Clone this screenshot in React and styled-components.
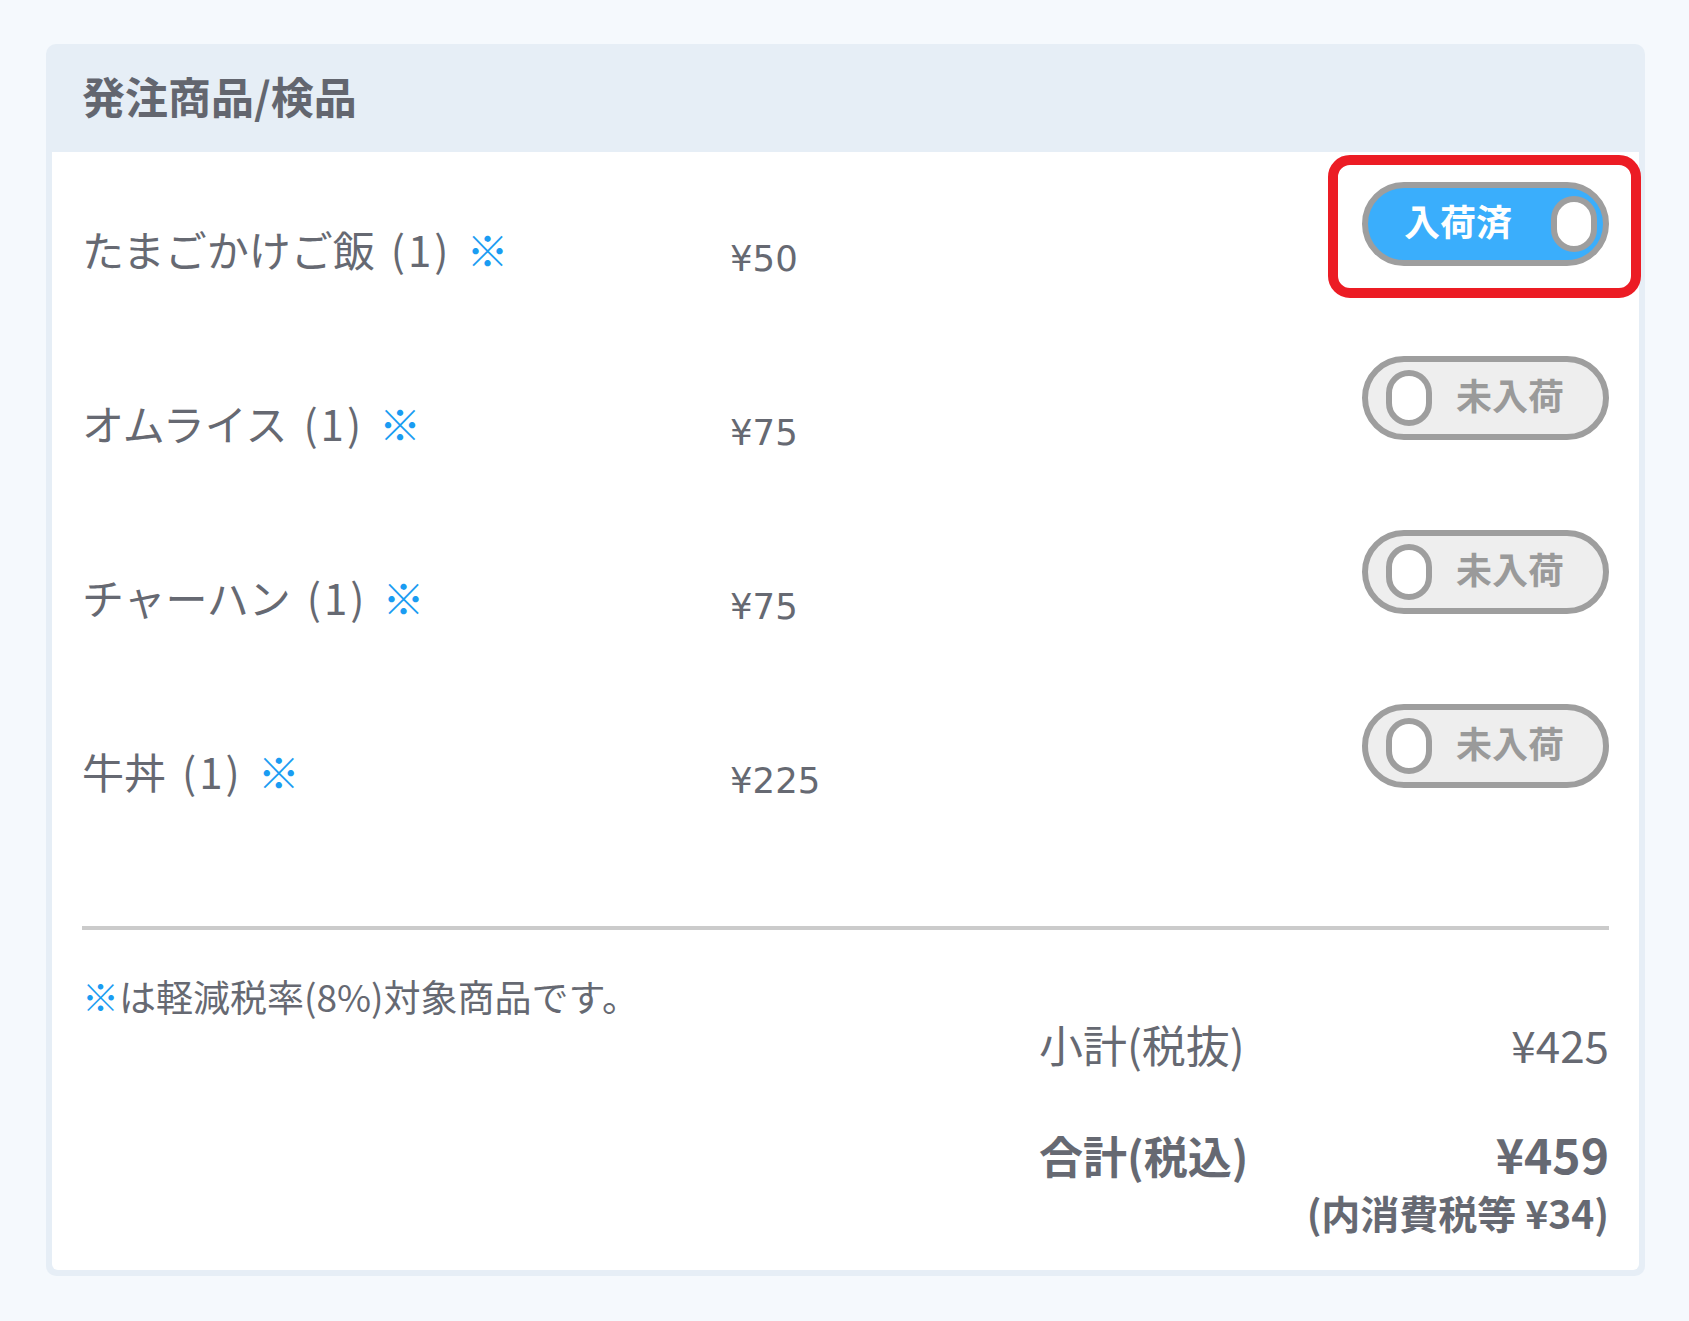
import React from 'react';
import styled, { createGlobalStyle } from 'styled-components';

const GlobalStyle = createGlobalStyle`
  html, body {
    margin: 0;
    padding: 0;
    background: #f5f9fd;
  }
  body {
    font-family: "Noto Sans CJK JP", "Noto Sans", sans-serif;
    color: #666972;
  }
`;

const Page = styled.div`
  padding: 44px 44px 45px 46px;
`;

const Card = styled.section`
  background: #e6eef6;
  border-radius: 10px;
  padding: 0 6px 6px;
`;

const Header = styled.header`
  height: 108px;
  box-sizing: border-box;
  display: flex;
  align-items: center;
  padding: 0 30px 6px;
`;

const Title = styled.h2`
  margin: 0;
  font-size: 43px;
  line-height: 1;
  font-weight: 700;
  color: #63666f;
`;

const Body = styled.div`
  background: #fff;
  border-radius: 0 0 6px 6px;
  padding: 0 30px 34px;
`;

const Row = styled.div`
  display: flex;
  align-items: flex-start;
  height: 174px;
`;

const Name = styled.div`
  width: 648px;
  padding-top: 65px;
  font-size: 42px;
  line-height: 63px;
  color: #666972;
`;

const Qty = styled.span`
  margin-left: 16px;
  letter-spacing: 3px;
`;

const Mark = styled.span`
  color: #1a9cf2;
  margin-left: ${p => p.$gap || 0}px;
`;

const Price = styled.div`
  flex: 1;
  padding-top: 80px;
  font-family: "DejaVu Sans", sans-serif;
  font-size: 35.5px;
  line-height: 54px;
  color: #666972;
`;

const ToggleWrap = styled.div`
  position: relative;
  margin-top: 30px;

  ${p => p.$highlight && `
    &::after {
      content: '';
      position: absolute;
      inset: -27px -32px -32px -34px;
      border: 10px solid #ec1c24;
      border-radius: 22px;
      pointer-events: none;
    }
  `}
`;

const Toggle = styled.button`
  box-sizing: border-box;
  width: 247px;
  height: 84px;
  border: 6px solid #9e9e9e;
  border-radius: 42px;
  display: flex;
  align-items: center;
  gap: ${p => (p.$on ? 0 : 24)}px;
  justify-content: ${p => (p.$on ? 'space-between' : 'flex-start')};
  padding: ${p => (p.$on ? '0 6px 0 36px' : '0 0 0 18px')};
  background: ${p => (p.$on ? '#3aaefc' : '#eeeeee')};
  font-family: "Noto Sans CJK JP", sans-serif;
  cursor: pointer;
`;

const ToggleLabel = styled.span`
  font-size: 36px;
  line-height: 1;
  font-weight: 700;
  margin-bottom: 8px;
  color: ${p => (p.$on ? '#ffffff' : '#9a9a9a')};
`;

const Knob = styled.span`
  box-sizing: border-box;
  width: 46px;
  height: 56px;
  border: 6px solid #9e9e9e;
  border-radius: 23px;
  background: #fff;
  flex-shrink: 0;
`;

const Divider = styled.hr`
  margin: 78px 0 0;
  border: none;
  height: 4px;
  background: #cbcbcb;
`;

const Footer = styled.div`
  display: flex;
  justify-content: space-between;
  align-items: flex-start;
`;

const Note = styled.p`
  margin: 39px 0 0;
  font-size: 37px;
  line-height: 54px;
  color: #666972;
`;

const Totals = styled.div`
  width: 570px;
  margin-top: 81px;
`;

const SumRow = styled.div`
  display: flex;
  justify-content: space-between;
  align-items: baseline;
  margin-top: ${p => p.$mt || 0}px;
  font-size: 44px;
  line-height: 66px;
  font-weight: ${p => (p.$bold ? 700 : 400)};
  color: #666972;
`;

const BigValue = styled.span`
  font-size: 48px;
`;

const TaxNote = styled.div`
  text-align: right;
  font-size: 39px;
  line-height: 48px;
  font-weight: 700;
  color: #666972;
`;

const items = [
  { name: 'たまごかけご飯', qty: '(1)', price: '¥50', on: true },
  { name: 'オムライス', qty: '(1)', price: '¥75', on: false },
  { name: 'チャーハン', qty: '(1)', price: '¥75', on: false },
  { name: '牛丼', qty: '(1)', price: '¥225', on: false },
];

const App = () => (
  <>
    <GlobalStyle />
    <Page>
      <Card>
        <Header>
          <Title>発注商品/検品</Title>
        </Header>
        <Body>
          {items.map((item, i) => (
            <Row key={i}>
              <Name>
                {item.name}
                <Qty>{item.qty}</Qty>
                <Mark $gap={15}>※</Mark>
              </Name>
              <Price>{item.price}</Price>
              <ToggleWrap $highlight={item.on}>
                <Toggle $on={item.on}>
                  {item.on ? (
                    <>
                      <ToggleLabel $on>入荷済</ToggleLabel>
                      <Knob />
                    </>
                  ) : (
                    <>
                      <Knob />
                      <ToggleLabel>未入荷</ToggleLabel>
                    </>
                  )}
                </Toggle>
              </ToggleWrap>
            </Row>
          ))}

          <Divider />

          <Footer>
            <Note>
              <Mark>※</Mark>は軽減税率(8%)対象商品です。
            </Note>
            <Totals>
              <SumRow>
                <span>小計(税抜)</span>
                <span>¥425</span>
              </SumRow>
              <SumRow $bold $mt={43}>
                <span>合計(税込)</span>
                <BigValue>¥459</BigValue>
              </SumRow>
              <TaxNote>(内消費税等 ¥34)</TaxNote>
            </Totals>
          </Footer>
        </Body>
      </Card>
    </Page>
  </>
);

export default App;
